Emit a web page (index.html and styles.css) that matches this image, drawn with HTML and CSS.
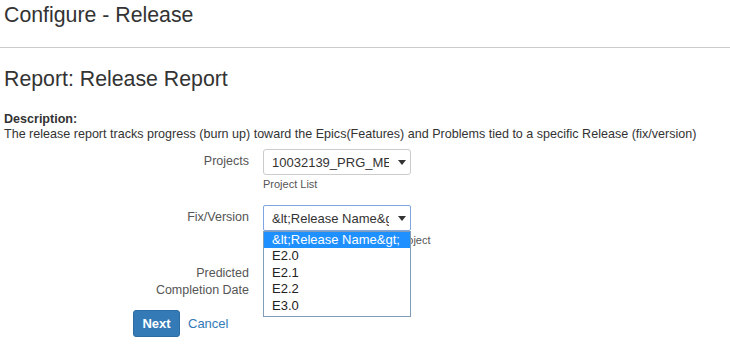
FILE: index.html
```html
<!DOCTYPE html>
<html>
<head>
<meta charset="utf-8">
<link rel="stylesheet" href="styles.css">
</head>
<body>
<header class="page-header">
  <h1 class="title">Configure - Release</h1>
</header>
<main class="content">
  <h2 class="report-title">Report: Release Report</h2>
  <div class="desc">
    <div class="desc-label">Description:</div>
    <div class="desc-text">The release report tracks progress (burn up) toward the Epics(Features) and Problems tied to a specific Release (fix/version)</div>
  </div>
  <div class="form">
    <div class="row">
      <div class="label">Projects</div>
      <div class="control">
        <div class="select">
          <span class="select-value">10032139_PRG_MEDIA</span>
          <svg class="caret" width="8" height="5" viewBox="0 0 8 5"><path d="M0 0H8L4 5Z" fill="#333"/></svg>
        </div>
        <div class="help">Project List</div>
      </div>
    </div>
    <div class="row row-fix">
      <div class="label">Fix/Version</div>
      <div class="control">
        <div class="dropdown-wrap">
          <div class="select select-focus">
            <span class="select-value">&amp;lt;Release Name&amp;gt;</span>
            <svg class="caret" width="8" height="5" viewBox="0 0 8 5"><path d="M0 0H8L4 5Z" fill="#333"/></svg>
          </div>
          <ul class="options">
            <li class="option selected">&amp;lt;Release Name&amp;gt;</li>
            <li class="option">E2.0</li>
            <li class="option">E2.1</li>
            <li class="option">E2.2</li>
            <li class="option">E3.0</li>
          </ul>
        </div>
        <div class="help">Select a Fix/Version for the project</div>
      </div>
    </div>
    <div class="row row-date">
      <div class="label">Predicted<br>Completion Date</div>
      <div class="control"></div>
    </div>
  </div>
  <div class="actions">
    <button class="btn-next">Next</button>
    <a class="cancel" href="#">Cancel</a>
  </div>
</main>
</body>
</html>
```
FILE: styles.css
```css
* { box-sizing: border-box; }
html, body { margin: 0; padding: 0; background: #fff; }
body {
  font-family: "Liberation Sans", Arial, sans-serif;
  color: #333;
  font-size: 13px;
  width: 730px;
  height: 347px;
  overflow: hidden;
}
.page-header {
  border-bottom: 1px solid #ccc;
  padding: 3px 4px 0;
  height: 48px;
}
.title {
  margin: 0;
  font-size: 21.3px;
  font-weight: normal;
  line-height: 24px;
  color: #333;
}
.content { padding: 0 4px; }
.report-title {
  margin: 19px 0 0;
  font-size: 21.3px;
  font-weight: normal;
  line-height: 24px;
  color: #333;
}
.desc { margin-top: 21px; font-size: 12.55px; line-height: 15px; }
.desc-label { font-weight: bold; }
.form { margin-top: 7px; }
.row {
  display: grid;
  grid-template-columns: 245px 1fr;
  column-gap: 14px;
}
.label {
  text-align: right;
  color: #555;
  font-size: 12.5px;
  line-height: 17px;
  padding-top: 4px;
}
.control { position: relative; }
.select {
  width: 148px;
  height: 26px;
  border: 1px solid #ccc;
  border-radius: 3px;
  background: #fff;
  display: flex;
  align-items: center;
  padding-left: 8px;
  padding-right: 4px;
}
.select-value {
  width: 117px;
  overflow: hidden;
  white-space: nowrap;
  color: #333;
  font-size: 13px;
}
.caret { margin-left: auto; }
.select-focus { border-color: #7fa6e3; border-radius: 2px; }
.help {
  font-size: 11px;
  color: #555;
  line-height: 13px;
  margin-top: 3px;
}
.row-fix { margin-top: 14px; }
.dropdown-wrap { position: relative; width: 148px; }
.options {
  position: absolute;
  top: 26px;
  left: 0;
  width: 148px;
  margin: 0;
  padding: 0 0 2px;
  list-style: none;
  border: 1px solid #7f9db9;
  background: #fff;
  z-index: 2;
}
.option {
  height: 16.4px;
  line-height: 16px;
  padding-left: 8px;
  font-size: 13px;
  color: #222;
  white-space: nowrap;
}
.option.selected { background: #1e90ff; color: #fff; }
.row-date { margin-top: 14px; }
.actions {
  margin-top: 11px;
  padding-left: 129px;
  display: flex;
  align-items: center;
  gap: 8px;
}
.btn-next {
  width: 47px;
  height: 27px;
  border: 1px solid #2e6da4;
  border-radius: 3px;
  background: #337ab7;
  color: #fff;
  font-family: "Liberation Sans", Arial, sans-serif;
  font-weight: bold;
  font-size: 13px;
  padding: 0;
}
.cancel { color: #337ab7; text-decoration: none; font-size: 13px; }
```
